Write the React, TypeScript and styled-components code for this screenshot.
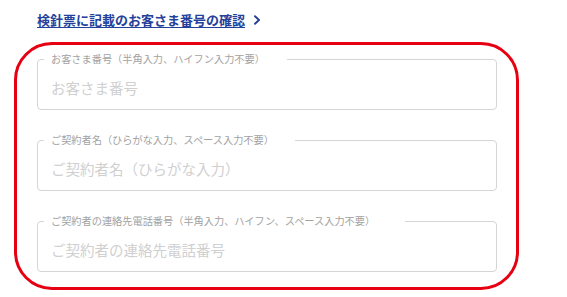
import React from "react";
import styled, { createGlobalStyle } from "styled-components";

const Global = createGlobalStyle`
  html, body { margin: 0; padding: 0; background: #ffffff; }
  body { font-family: "Noto Sans CJK JP", "Noto Sans", sans-serif; }
  * { box-sizing: border-box; }
`;

const Page = styled.div`
  width: 567px;
  height: 297px;
  padding: 11px 0 0 14px;
  overflow: hidden;
`;

const LinkRow = styled.div`
  display: flex;
  align-items: center;
  gap: 8px;
  padding-left: 23px;
  height: 18px;
  margin-bottom: 13px;
`;

const HelpLink = styled.a`
  font-size: 13px;
  line-height: 18px;
  font-weight: 700;
  color: #23409a;
  text-decoration: underline;
  text-decoration-thickness: 1px;
  text-underline-offset: 2px;
  cursor: pointer;
`;

const Chevron = styled.svg`
  width: 8px;
  height: 10px;
  display: block;
`;

const Highlight = styled.div`
  width: 505px;
  border: 3px solid #e60012;
  border-radius: 38px;
  padding: 8px 19px 15px 20px;
  display: flex;
  flex-direction: column;
  gap: 24px;
`;

const Field = styled.fieldset`
  margin: 0;
  min-width: 0;
  padding: 0 6px;
  border: 1px solid #d5d5d5;
  border-radius: 4px;
`;

const Legend = styled.legend<{ $notch: number }>`
  font-size: 10.2px;
  line-height: 12px;
  color: #a2a2a2;
  padding: 0 ${(p) => p.$notch}px 0 7px;
  margin: 0;
  white-space: nowrap;
`;

const Input = styled.input`
  display: block;
  width: 100%;
  height: 44px;
  border: none;
  outline: none;
  background: transparent;
  padding: 0 7px;
  font-family: "Noto Sans CJK JP", "Noto Sans", sans-serif;
  font-size: 14.5px;
  color: #333;
  &::placeholder {
    color: #d0d0d0;
  }
`;

const fields = [
  {
    label: "お客さま番号（半角入力、ハイフン入力不要）",
    placeholder: "お客さま番号",
    notch: 22,
  },
  {
    label: "ご契約者名（ひらがな入力、スペース入力不要）",
    placeholder: "ご契約者名（ひらがな入力）",
    notch: 21,
  },
  {
    label: "ご契約者の連絡先電話番号（半角入力、ハイフン、スペース入力不要）",
    placeholder: "ご契約者の連絡先電話番号",
    notch: 30,
  },
];

export default function App() {
  return (
    <>
      <Global />
      <Page>
        <LinkRow>
          <HelpLink>検針票に記載のお客さま番号の確認</HelpLink>
          <Chevron viewBox="0 0 8 10">
            <path
              d="M2 1.2 L6 5 L2 8.8"
              fill="none"
              stroke="#23409a"
              strokeWidth="1.9"
              strokeLinecap="round"
              strokeLinejoin="round"
            />
          </Chevron>
        </LinkRow>
        <Highlight>
          {fields.map((f) => (
            <Field key={f.label}>
              <Legend $notch={f.notch}>{f.label}</Legend>
              <Input placeholder={f.placeholder} />
            </Field>
          ))}
        </Highlight>
      </Page>
    </>
  );
}
